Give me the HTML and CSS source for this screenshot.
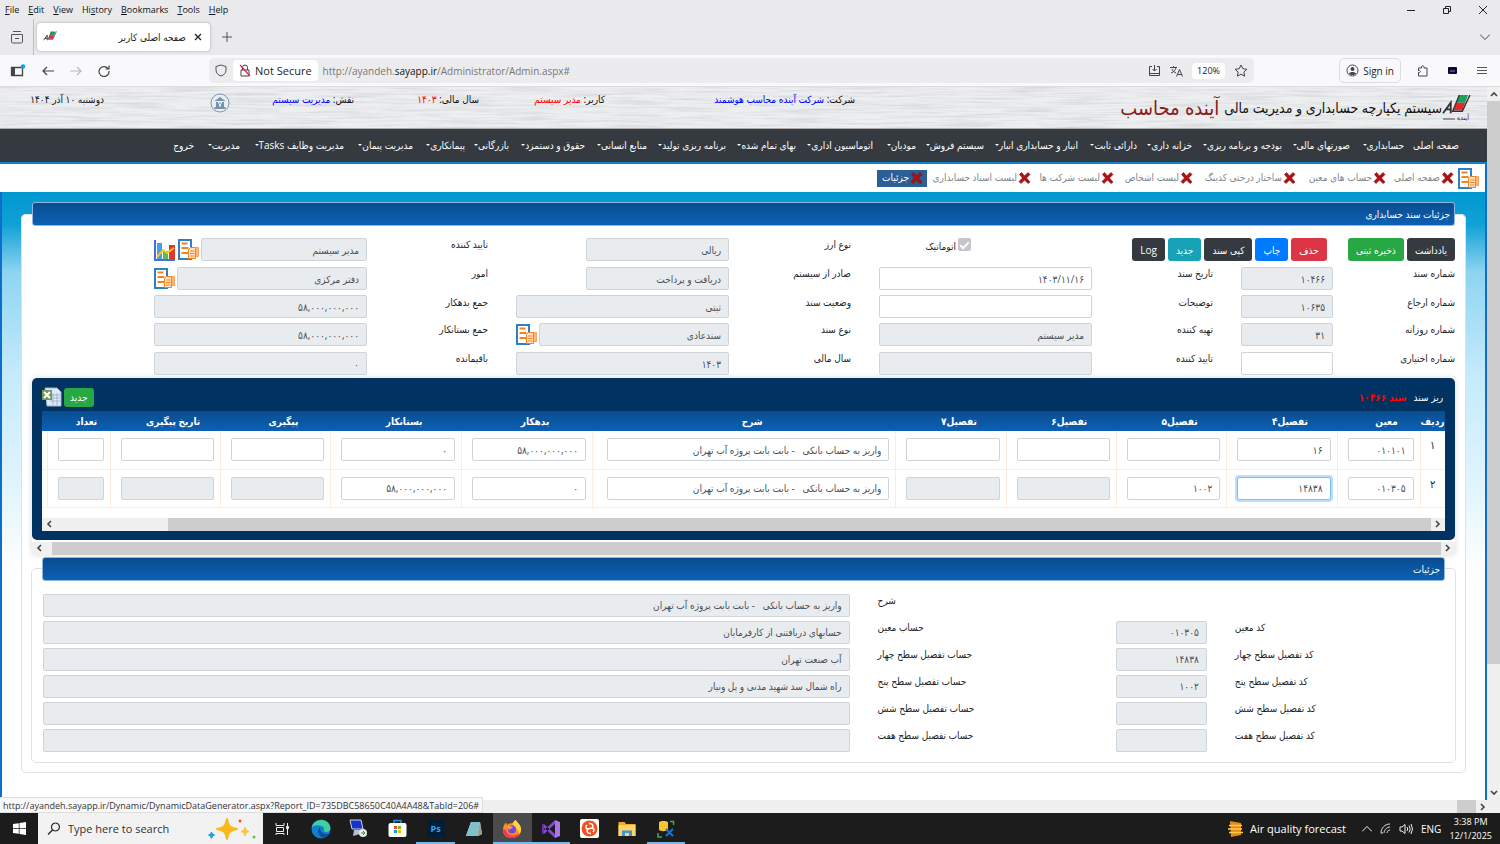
FILE: index.html
```
<!DOCTYPE html>
<html lang="fa">
<head>
    <meta charset="UTF-8" />
    <title>صفحه اصلی کاربر</title>
    <link rel="stylesheet" href="styles.css">
</head>
<body>
    <!-- shared icons -->
    <svg class="defs" width="0" height="0" aria-hidden="true">
        <symbol id="doc" viewBox="0 0 21 21">
            <path d="M1 1h12v19H1z" fill="#fff" stroke="#2f7fc4" stroke-width="2"/>
            <path d="M3.500 4.500h6M3.500 9h7M3.500 14h7" stroke="#f58220" stroke-width="2"/>
            <path d="M13.500 8.500h7v9h-7z" fill="#fbb877" stroke="#f7a35c"/>
            <path d="M10.500 10.500l2-2h5v11h-7z" fill="#fde3c8" stroke="#f58220"/>
            <path d="M12 12h4.500M12 14.500h4.500M12 17h4.500" stroke="#f58220"/>
        </symbol>
        <symbol id="cross" viewBox="0 0 12 12">
            <path d="M1 2.500L3 .500 6 4 9.500.500l2 2L8 6l3.500 4-2 1.500L6 8l-3.500 3.500L.500 9.500 4 6z" fill="#b01010" stroke="#7c0808" stroke-width=".6"/>
        </symbol>
        <symbol id="logo" viewBox="0 0 30 26">
            <path d="M1 20L9 9v11M4 16h5" fill="none" stroke="#333" stroke-width="2"/>
            <path d="M18 1h9l-3 8h-9z" fill="#19a35a"/>
            <path d="M15 9h9l-3 8h-9z" fill="#e8262c"/>
            <path d="M18 1l-7 17h10L29 1" fill="none" stroke="#333" stroke-width="1.500"/>
        </symbol>
        <symbol id="chev-l" viewBox="0 0 8 8"><path d="M6 1L3 4l3 3" fill="none" stroke="#444" stroke-width="1.600"/></symbol>
        <symbol id="chev-r" viewBox="0 0 8 8"><path d="M2 1l3 3-3 3" fill="none" stroke="#444" stroke-width="1.600"/></symbol>
        <symbol id="chev-u" viewBox="0 0 8 8"><path d="M1 6l3-3 3 3" fill="none" stroke="#444" stroke-width="1.600"/></symbol>
        <symbol id="chev-d" viewBox="0 0 8 8"><path d="M1 2l3 3 3-3" fill="none" stroke="#444" stroke-width="1.600"/></symbol>
    </svg>

    <!-- browser -->
    <div class="menubar">
        <a href="#"><u>F</u>ile</a><a href="#"><u>E</u>dit</a><a href="#"><u>V</u>iew</a><a href="#">Hi<u>s</u>tory</a><a href="#"><u>B</u>ookmarks</a><a href="#"><u>T</u>ools</a><a href="#"><u>H</u>elp</a>
        <div class="winbtns">
            <button aria-label="Minimize"><svg width="10" height="10"><path d="M1 5.500h8" stroke="#222"/></svg></button>
            <button aria-label="Restore"><svg width="10" height="10" fill="none" stroke="#222"><path d="M1.500 3.500h5v5h-5zM3.500 3V1.500h5v5H7"/></svg></button>
            <button aria-label="Close"><svg width="10" height="10"><path d="M1 1l8 8M9 1L1 9" stroke="#222"/></svg></button>
        </div>
    </div>
    <div class="tabstrip">
        <button class="recent" aria-label="Recent"><svg width="14" height="14" fill="none" stroke="#555"><path d="M3 1.500h8M1.500 4.500h11v7.500l-1 1h-9l-1-1zM5 8.500h4"/></svg></button>
        <div class="tab">
            <svg width="14" height="12"><use href="#logo"/></svg>
            <span class="tab-title">صفحه اصلی کاربر</span>
            <button aria-label="Close tab"><svg width="8" height="8"><path d="M1 1l6 6M7 1L1 7" stroke="#222" stroke-width="1.300"/></svg></button>
        </div>
        <button aria-label="New tab"><svg width="10" height="10"><path d="M5 0v10M0 5h10" stroke="#555"/></svg></button>
        <button class="alltabs" aria-label="All tabs"><svg width="10" height="6"><path d="M0 .500l5 5 5-5" fill="none" stroke="#444"/></svg></button>
    </div>
    <div class="toolbar">
        <div class="navbtns">
            <button aria-label="Sidebar"><svg width="16" height="14" fill="none"><path d="M1.500 3.500h11v8h-11z" stroke="#444" stroke-width="1.300"/><path d="M2 4h3v7H2z" fill="#444"/><circle cx="13" cy="2.500" r="2.200" fill="#00a4ef"/></svg></button>
            <button aria-label="Back"><svg width="12" height="10"><path d="M5 1L1 5l4 4M1 5h11" fill="none" stroke="#444" stroke-width="1.200"/></svg></button>
            <button aria-label="Forward"><svg width="12" height="10"><path d="M7 1l4 4-4 4M11 5H0" fill="none" stroke="#bbb" stroke-width="1.200"/></svg></button>
            <button aria-label="Reload"><svg width="12" height="12"><path d="M10 3.500A5 5 0 1 0 11 6M11 .500V4H7.500" fill="none" stroke="#444" stroke-width="1.200"/></svg></button>
        </div>
        <div class="urlbar">
            <svg width="12" height="13"><path d="M6 1l5 1.500V6c0 3-2 5-5 6-3-1-5-3-5-6V2.500z" fill="none" stroke="#555"/></svg>
            <button class="secure"><svg width="12" height="13" fill="none"><path d="M2 6h8v6H2zM3.500 6V3.500a2.500 2.500 0 0 1 5 0V6" stroke="#444"/><path d="M1 1l10 11" stroke="#e22850" stroke-width="1.300"/></svg>Not Secure</button>
            <span class="url">http://ayandeh.<b>sayapp.ir</b>/Administrator/Admin.aspx#</span>
            <button aria-label="Install"><svg width="13" height="12" fill="none" stroke="#444"><path d="M4 1.500H1.500v9h10v-9H9M6.500 0v6M4.500 4l2 2 2-2M1.500 8.500h10"/></svg></button>
            <button aria-label="Translate"><svg width="13" height="12" fill="none" stroke="#444"><path d="M0 2.500h7M3.500 1v1.500M1 8c3-1 4.500-3 5-5.500M2 4c.5 2 2 3 4 4M6.500 11.500l3-7 3 7M7.500 9.500h4"/></svg></button>
            <button class="zoom">120%</button>
            <button aria-label="Bookmark"><svg width="14" height="13"><path d="M7 1l1.800 3.700 4.100.6-3 2.800.7 4L7 10.200 3.400 12.100l.7-4-3-2.800 4.100-.6z" fill="none" stroke="#444"/></svg></button>
        </div>
        <div class="tools">
            <button class="signin"><svg width="13" height="13"><circle cx="6.500" cy="6.500" r="5.500" fill="none" stroke="#444"/><circle cx="6.500" cy="5" r="2" fill="#444"/><path d="M3 9.500c1-2 6-2 7 0-2 2-5 2-7 0z" fill="#444"/></svg>Sign in</button>
            <button aria-label="Extensions"><svg width="12" height="13"><path d="M1.500 12V8.500c2.500.5 2.500-2.500 0-2V4h3c-.5-3 3-3 2.500 0h3v8z" fill="none" stroke="#444"/></svg></button>
            <button aria-label="Add-on"><svg width="10" height="9"><rect y="1" width="9" height="7" rx="1" fill="#0c0830"/><path d="M2 5h5" stroke="#8a86c0"/></svg></button>
            <button aria-label="Menu"><svg width="10" height="9"><path d="M0 1.500h10M0 4.500h10M0 7.500h10" stroke="#555"/></svg></button>
        </div>
    </div>

    <div class="viewport">
        <div class="page" dir="rtl">
            <header class="head">
                <svg class="metal" aria-hidden="true"><filter id="brush"><feTurbulence type="fractalNoise" baseFrequency="0.018 0.45" numOctaves="3" seed="4"/><feColorMatrix values="0 0 0 0 .45  0 0 0 0 .47  0 0 0 0 .49  .8 0 0 0 -.32"/></filter><rect width="100%" height="100%" filter="url(#brush)"/></svg>
                <div class="brand">
                    <div class="brandlogo"><svg width="29" height="28"><use href="#logo" height="25"/><path d="M1 25h12" stroke="#444"/><text x="27" y="26" font-size="7" fill="#222">آینده</text></svg></div>
                    <span>سیستم یکپارچه حسابداری و مدیریت مالی</span><b>آینده محاسب</b>
                </div>
                <div>شرکت: <span class="blue">شرکت آینده محاسب هوشمند</span></div>
                <div>کاربر: <span class="red">مدیر سیستم</span></div>
                <div>سال مالی: <span class="red">۱۴۰۳</span></div>
                <div>نقش: <span class="blue">مدیریت سیستم</span></div>
                <div class="seal"><svg width="20" height="20"><circle cx="10" cy="10" r="9" fill="#e9eef2" stroke="#7d98ad"/><path d="M4.500 8L10 4l5.500 4zM6 9h2v5H6zM12 9h2v5h-2zM4.500 14h11v2h-11z" fill="#7593ad"/><path d="M8.500 14v-3l1.500-1.500 1.500 1.500v3z" fill="none" stroke="#7593ad"/></svg></div>
                <div>دوشنبه ۱۰ آذر ۱۴۰۴</div>
            </header>
            <nav class="nav">
                <a href="#">صفحه اصلی</a>
                <a href="#" class="drop">حسابداری</a>
                <a href="#" class="drop">صورتهای مالی</a>
                <a href="#" class="drop">بودجه و برنامه ریزی</a>
                <a href="#" class="drop">خزانه داری</a>
                <a href="#" class="drop">دارائی ثابت</a>
                <a href="#" class="drop">انبار و حسابداری انبار</a>
                <a href="#" class="drop">سیستم فروش</a>
                <a href="#" class="drop">مودیان</a>
                <a href="#" class="drop">اتوماسیون اداری</a>
                <a href="#" class="drop">بهای تمام شده</a>
                <a href="#" class="drop">برنامه ریزی تولید</a>
                <a href="#" class="drop">منابع انسانی</a>
                <a href="#" class="drop">حقوق و دستمزد</a>
                <a href="#" class="drop">بازرگانی</a>
                <a href="#" class="drop">پیمانکاری</a>
                <a href="#" class="drop">مدیریت پیمان</a>
                <a href="#" class="drop">مدیریت وظایف Tasks</a>
                <a href="#" class="drop">مدیریت</a>
                <a href="#">خروج</a>
            </nav>
            <div class="opened">
                <svg width="21" height="21"><use href="#doc"/></svg>
                <div class="opened-list">
                    <a href="#"><svg><use href="#cross"/></svg>صفحه اصلی</a>
                    <a href="#"><svg><use href="#cross"/></svg>حساب های معین</a>
                    <a href="#"><svg><use href="#cross"/></svg>ساختار درختی کدینگ</a>
                    <a href="#"><svg><use href="#cross"/></svg>لیست اشخاص</a>
                    <a href="#"><svg><use href="#cross"/></svg>لیست شرکت ها</a>
                    <a href="#"><svg><use href="#cross"/></svg>لیست اسناد حسابداری</a>
                    <a href="#" class="active"><svg><use href="#cross"/></svg>جزئیات</a>
                </div>
            </div>
            <main class="main">
                <fieldset class="voucher">
                    <legend>جزئیات سند حسابداری</legend>
                    <div class="form">
                        <div class="btns">
                            <button class="btn dark">یادداشت</button>
                            <button class="btn green save">ذخیره ثبتی</button>
                            <button class="btn danger">حذف</button>
                            <button class="btn primary">چاپ</button>
                            <button class="btn dark">کپی سند</button>
                            <button class="btn info">جدید</button>
                            <button class="btn dark">Log</button>
                        </div>
                        <div class="auto c5"><input type="checkbox" id="auto" checked disabled><label for="auto">اتوماتیک</label></div>
                        <label class="c7" for="cur">نوع ارز</label>
                        <div class="c8 short"><input id="cur" value="ریالی" readonly></div>
                        <label class="c10" for="conf">تایید کننده</label>
                        <div class="c11"><input id="conf" value="مدیر سیستم" readonly><svg width="21" height="21"><use href="#doc"/></svg><svg width="22" height="22" viewBox="0 0 22 22"><path d="M1 1v20h20" stroke="#456fd8" stroke-width="2" fill="none"/><path d="M3 4h5v16H3z" fill="#4c9bf5"/><path d="M9 12h5v8H9z" fill="#4cc54a"/><path d="M15 6h6v14h-6z" fill="#e2362b"/><path d="M3 18l6-7 4 3 7-5" fill="none" stroke="#f7c81c" stroke-width="2"/></svg></div>

                        <label class="c1" for="num">شماره سند</label>
                        <div class="c2"><input id="num" value="۱۰۴۶۶" readonly></div>
                        <label class="c4" for="date">تاریخ سند</label>
                        <div class="c5"><input id="date" value="۱۴۰۳/۱۱/۱۶"></div>
                        <label class="c7" for="src">صادر از سیستم</label>
                        <div class="c8 short"><input id="src" value="دریافت و پرداخت" readonly></div>
                        <label class="c10" for="aff">امور</label>
                        <div class="c11"><input id="aff" value="دفتر مرکزی" readonly><svg width="21" height="21"><use href="#doc"/></svg></div>

                        <label class="c1" for="ref">شماره ارجاع</label>
                        <div class="c2"><input id="ref" value="۱۰۶۳۵" readonly></div>
                        <label class="c4" for="desc">توضیحات</label>
                        <div class="c5"><input id="desc"></div>
                        <label class="c7" for="state">وضعیت سند</label>
                        <div class="c8"><input id="state" value="ثبتی" readonly></div>
                        <label class="c10" for="deb">جمع بدهکار</label>
                        <div class="c11"><input id="deb" value="۵۸,۰۰۰,۰۰۰,۰۰۰" readonly></div>

                        <label class="c1" for="daily">شماره روزانه</label>
                        <div class="c2"><input id="daily" value="۳۱" readonly></div>
                        <label class="c4" for="maker">تهیه کننده</label>
                        <div class="c5"><input id="maker" value="مدیر سیستم" readonly></div>
                        <label class="c7" for="kind">نوع سند</label>
                        <div class="c8"><input id="kind" value="سندعادی" readonly><svg width="21" height="21"><use href="#doc"/></svg></div>
                        <label class="c10" for="cre">جمع بستانکار</label>
                        <div class="c11"><input id="cre" value="۵۸,۰۰۰,۰۰۰,۰۰۰" readonly></div>

                        <label class="c1" for="opt">شماره اختیاری</label>
                        <div class="c2"><input id="opt"></div>
                        <label class="c4" for="conf2">تایید کننده</label>
                        <div class="c5"><input id="conf2" readonly></div>
                        <label class="c7" for="year">سال مالی</label>
                        <div class="c8"><input id="year" value="۱۴۰۳" readonly></div>
                        <label class="c10" for="rest">باقیمانده</label>
                        <div class="c11"><input id="rest" class="red" value="۰" readonly></div>
                    </div>

                    <div class="grid-shell">
                        <section class="grid-box">
                            <div class="grid-head">
                                <span>ریز سند</span><b>سند ۱۰۴۶۶</b>
                                <button class="btn green small">جدید</button>
                                <svg width="20" height="20" viewBox="0 0 20 20"><path d="M3 1h12l4 4v14H5z" fill="#dfe9f5" stroke="#9fb4cc"/><path d="M8 8h10M8 11h10M8 14h10M11 6v12M15 6v12" stroke="#9db7d3"/><path d="M0 3h10v10H0z" fill="#6f9a5b"/><path d="M2 5l6 6M8 5l-6 6" stroke="#fff" stroke-width="2"/></svg>
                            </div>
                            <div class="grid-body">
                                <table>
                                    <colgroup><col class="w25"><col class="w83"><col class="w111"><col class="w111"><col class="w111"><col class="w111"><col class="w302"><col class="w130"><col class="w130"><col class="w111"><col class="w111"><col class="w63"><col class="w5"></colgroup>
                                    <thead>
                                        <tr><th>ردیف</th><th>معین</th><th>تفصیل۴</th><th>تفصیل۵</th><th>تفصیل۶</th><th>تفصیل۷</th><th>شرح</th><th>بدهکار</th><th>بستانکار</th><th>پیگیری</th><th>تاریخ پیگیری</th><th>تعداد</th><th></th></tr>
                                    </thead>
                                    <tbody>
                                        <tr>
                                            <td class="no">۱</td>
                                            <td><input aria-label="معین" value="۰۱۰۱۰۱"></td>
                                            <td><input aria-label="تفصیل۴" value="۱۶"></td>
                                            <td><input aria-label="تفصیل۵"></td>
                                            <td><input aria-label="تفصیل۶"></td>
                                            <td><input aria-label="تفصیل۷"></td>
                                            <td><input aria-label="شرح" value="واریز به حساب بانکی   - بابت بابت پروژه آب تهران"></td>
                                            <td><input aria-label="بدهکار" value="۵۸,۰۰۰,۰۰۰,۰۰۰"></td>
                                            <td><input aria-label="بستانکار" value="۰"></td>
                                            <td><input aria-label="پیگیری"></td>
                                            <td><input aria-label="تاریخ پیگیری"></td>
                                            <td><input aria-label="تعداد"></td>
                                            <td></td>
                                        </tr>
                                        <tr>
                                            <td class="no">۲</td>
                                            <td><input aria-label="معین" value="۰۱۰۳۰۵"></td>
                                            <td><input aria-label="تفصیل۴" class="focus" value="۱۴۸۳۸"></td>
                                            <td><input aria-label="تفصیل۵" value="۱۰۰۲"></td>
                                            <td><input aria-label="تفصیل۶" readonly></td>
                                            <td><input aria-label="تفصیل۷" readonly></td>
                                            <td><input aria-label="شرح" value="واریز به حساب بانکی   - بابت بابت پروژه آب تهران"></td>
                                            <td><input aria-label="بدهکار" value="۰"></td>
                                            <td><input aria-label="بستانکار" value="۵۸,۰۰۰,۰۰۰,۰۰۰"></td>
                                            <td><input aria-label="پیگیری" readonly></td>
                                            <td><input aria-label="تاریخ پیگیری" readonly></td>
                                            <td><input aria-label="تعداد" readonly></td>
                                            <td></td>
                                        </tr>
                                    </tbody>
                                </table>
                                <div class="hscroll" dir="ltr"><svg><use href="#chev-l"/></svg><i class="gap-left"></i><i class="thumb"></i><svg><use href="#chev-r"/></svg></div>
                            </div>
                        </section>
                        <div class="hscroll outer" dir="ltr"><svg><use href="#chev-l"/></svg><i class="thumb"></i><svg><use href="#chev-r"/></svg></div>
                    </div>

                    <fieldset class="details">
                        <legend>جزئیات</legend>
                        <div class="dform">
                            <label class="d3" for="d0">شرح</label><input class="d4" id="d0" value="واریز به حساب بانکی   - بابت بابت پروژه آب تهران" readonly>
                            <label class="d1" for="k1">کد معین</label><input class="d2" id="k1" value="۰۱۰۳۰۵" readonly>
                            <label class="d3" for="d1">حساب معین</label><input class="d4" id="d1" value="حسابهای دریافتنی از کارفرمایان" readonly>
                            <label class="d1" for="k2">کد تفصیل سطح چهار</label><input class="d2" id="k2" value="۱۴۸۳۸" readonly>
                            <label class="d3" for="d2">حساب تفصیل سطح چهار</label><input class="d4" id="d2" value="آب صنعت تهران" readonly>
                            <label class="d1" for="k3">کد تفصیل سطح پنج</label><input class="d2" id="k3" value="۱۰۰۲" readonly>
                            <label class="d3" for="d3">حساب تفصیل سطح پنج</label><input class="d4" id="d3" value="راه شمال سد شهید مدنی و پل ونیار" readonly>
                            <label class="d1" for="k4">کد تفصیل سطح شش</label><input class="d2" id="k4" readonly>
                            <label class="d3" for="d4">حساب تفصیل سطح شش</label><input class="d4" id="d4" readonly>
                            <label class="d1" for="k5">کد تفصیل سطح هفت</label><input class="d2" id="k5" readonly>
                            <label class="d3" for="d5">حساب تفصیل سطح هفت</label><input class="d4" id="d5" readonly>
                        </div>
                    </fieldset>
                </fieldset>
            </main>
        </div>
        <div class="vscroll"><svg><use href="#chev-u"/></svg><i class="thumb"></i><i class="rest"></i><svg><use href="#chev-d"/></svg></div>
    </div>
    <div class="hscroll pagescroll"><i class="rest"></i><i class="thumb"></i><svg><use href="#chev-r"/></svg><div class="status">http://ayandeh.sayapp.ir/Dynamic/DynamicDataGenerator.aspx?Report_ID=735DBC58650C40A4A48&amp;TabId=206#</div></div>

    <!-- windows taskbar -->
    <footer class="taskbar">
        <button class="start" aria-label="Start"><svg width="13" height="13"><path d="M0 2l5.800-.8V6H0zM6.500 1L13 0v6H6.500zM0 6.700h5.800v5L0 11zM6.500 6.700H13V13l-6.500-1z" fill="#fff"/></svg></button>
        <div class="search">
            <svg width="14" height="14"><path d="M8.500 1a4 4 0 1 1-.1 0M5.500 8L1 12.500" fill="none" stroke="#222" stroke-width="1.200"/></svg>
            <input type="search" placeholder="Type here to search" aria-label="Search">
            <svg width="48" height="22"><path d="M19 1c1 7 3 9 10 10-7 1-9 3-10 10-1-7-3-9-10-10 7-1 9-3 10-10z" fill="#fbb917" stroke="#fbb917" stroke-width="2" stroke-linejoin="round"/><path d="M37 9c.8 3 1.500 3.700 4 4.500-2.500.8-3.200 1.500-4 4.500-.8-3-1.500-3.700-4-4.500 2.500-.8 3.200-1.500 4-4.500z" fill="#fcc62d" stroke="#fcc62d"/><path d="M3.500 14l1 2 2 1-2 1-1 2.500-1-2.500L.5 17l2-1z" fill="#1aa0e8" stroke="#1aa0e8"/><circle cx="32" cy="3" r="1.500" fill="#f0562b"/><circle cx="46" cy="19" r="1.500" fill="#6bbf3a"/></svg>
        </div>
        <div class="apps">
            <button aria-label="Task view"><svg width="14" height="14" fill="none" stroke="#eee"><path d="M1 1v2.500h8V1M1.500 5.500h7v4h-7zM1 13v-1.500h8V13M12.500 1v3M12.500 7v6"/><path d="M11.500 4.500h2v2h-2z" fill="#eee"/></svg></button>
            <button aria-label="Edge"><svg width="20" height="20"><circle cx="10" cy="10" r="9.500" fill="#1280d0"/><path d="M.6 9C2-1 18-2 19.500 9c0 4-5 5-7 3 1-1 1-4-2-5C6 5.500 1.500 6 .6 9z" fill="#40cfa0"/><path d="M9 8c-4 4-1 10 4 11 3-1 5-3 5.500-4.500-3 1.500-10 0-9.500-6.500z" fill="#0f4c9c"/></svg></button>
            <button aria-label="Server"><svg width="19" height="19"><path d="M1 1h11l2 9H3z" fill="#1634c8" stroke="#c9d4e6"/><path d="M5 11h6v4l-7 2z" fill="#b8c1cc"/><circle cx="14" cy="14" r="4" fill="#e6eee6"/><path d="M12 14h4M14 12l2 2-2 2" fill="none" stroke="#3a8f46"/></svg></button>
            <button aria-label="Store"><svg width="19" height="19"><path d="M6 5V1.500h7V5" fill="none" stroke="#1a9be0" stroke-width="1.500"/><rect x=".5" y="4" width="18" height="14" rx="2" fill="#fff"/><path d="M6 7h3v3H6z" fill="#f25022"/><path d="M10 7h3v3h-3z" fill="#7fba00"/><path d="M6 11h3v3H6z" fill="#00a4ef"/><path d="M10 11h3v3h-3z" fill="#ffb900"/></svg></button>
            <button class="open" aria-label="Photoshop"><span class="ps">Ps</span></button>
            <button aria-label="Notepad"><svg width="18" height="18"><path d="M6 2h9l2 12-4 2H1z" fill="#d6edf0"/><path d="M6 2h9l-3 14H1z" fill="#7fc0cc"/><path d="M15 2l2 12-5 2z" fill="#9c9c88"/></svg></button>
            <button class="open current" aria-label="Firefox"><svg width="20" height="20"><path d="M10 19C4 19 .5 15 1 10c.2-3 1.500-5 3-6.500L5 6c2-2 4-2 5.500-1.500C11 3 12.500 1.500 14 1c0 2 5 4 5 9.500 0 5-4 8.500-9 8.500z" fill="#ff8a1e"/><path d="M14 1c0 2 5 4 5 9.500 0 2-1 4-2 5.500 0-6-4-6-6.500-11.500C11 3 12.500 1.500 14 1z" fill="#ffd43a"/><path d="M1 10c0 6 4 9 9 9 4 0 7-2 8-5-5 4-13 3-14-3z" fill="#f5365c"/><circle cx="10" cy="10.500" r="4" fill="#7a46d8"/><path d="M5 7c3 0 4 1 6 1-1 2-3 1-3.500 3z" fill="#ffab2e"/></svg></button>
            <button class="open" aria-label="Visual Studio"><svg width="20" height="20"><path d="M14 1l5 2v14l-5 2z" fill="#a878e8"/><path d="M1 6l2-1 11 10v4L1 7zM1 14l2 1L14 5V1L1 13z" fill="#8347d0"/><path d="M1 6v8l2 1V5z" fill="#6a32b4"/></svg></button>
            <button aria-label="Remote"><svg width="19" height="19"><rect width="19" height="19" rx="2" fill="#fff"/><circle cx="9.500" cy="9.500" r="8" fill="#f4511e"/><path d="M9 4.500c5-.5 5 5 1 5s-4 5.500 1 5M7 6c-2 2-1 4 1 4M12 9c2 0 3 2 1 4" fill="none" stroke="#fff" stroke-width="1.500"/></svg></button>
            <button aria-label="Explorer"><svg width="18" height="16"><path d="M.5 1h6l1.500 2h9.500v12H.5z" fill="#f0a92e"/><path d="M.5 4h17v11H.5z" fill="#fcd468"/><path d="M4 15V9.500h10V15h-3v-3H7v3z" fill="#3b95d9"/></svg></button>
            <button class="open" aria-label="Database"><svg width="18" height="18"><path d="M2 2c2-1.500 7-1.500 9 0v8c-2 1.500-7 1.500-9 0z" fill="#fcc52e"/><path d="M13 1.500h3.500V5M1 13v4h4" fill="none" stroke="#3fa94c" stroke-width="1.500"/><path d="M9 9l7 7M16 9l-7 7" stroke="#1c74c8" stroke-width="2"/></svg></button>
        </div>
        <div class="tray">
            <button class="air"><svg width="16" height="18"><path d="M2 1l11 2v12L3 17z" fill="#e58a14"/><path d="M1 5.500h13M0 9h14M1 12.500h14" stroke="#ffd04c" stroke-width="1.500"/></svg>Air quality forecast</button>
            <svg width="10" height="6"><path d="M0 5.500l5-5 5 5" fill="none" stroke="#eee"/></svg>
            <svg width="11" height="11" fill="none" stroke="#ddd"><path d="M1 10C1 5 5 1 10 1M4 10c0-3 3-6 6-6M7 10c0-2 1.500-3 3-3M1 10h2"/></svg>
            <svg width="14" height="12" fill="none" stroke="#eee"><path d="M1 4h2l3-2.500v9L3 8H1zM8 4q1.500 2 0 4M10 2.500q2.500 3.500 0 7M12 1q3 5 0 10"/></svg>
            <span class="lang">ENG</span>
            <div class="clock">3:38 PM<br>12/1/2025</div>
        </div>
    </footer>
</body>
</html>
```
FILE: styles.css
```
*{box-sizing:border-box;margin:0;padding:0;}
body{
    height:100vh;
    display:flex;
    flex-direction:column;
    overflow:hidden;
    font-family:"Open Sans","DejaVu Sans Condensed","DejaVu Sans",sans-serif;
    font-size:10px;
    color:#212529;
    background:#fff;
}
button{border:0;background:none;font:inherit;color:inherit;display:inline-flex;align-items:center;justify-content:center;white-space:nowrap;}
input{font:inherit;}
a{color:inherit;text-decoration:none;}
svg{flex:none;display:block;}
.defs{position:absolute;}
.red{color:#f00;}
.blue{color:#00f;}

/* browser */
.menubar{height:19px;flex:none;display:flex;align-items:center;gap:9px;padding-left:5px;background:#eaeaed;color:#111;font-size:9px;}
.winbtns{margin-left:auto;display:flex;gap:26px;padding-right:12px;}
.tabstrip{height:36px;flex:none;display:flex;align-items:center;gap:12px;background:#eaeaed;}
.recent{height:100%;width:34px;border-right:1px solid #bbb;}
.tab{width:173px;height:28px;margin-left:-9px;display:flex;align-items:center;gap:8px;padding:0 8px 0 6px;background:#fff;border-radius:4px;box-shadow:0 0 3px rgba(0,0,0,.3);}
.tab-title{flex:1;direction:rtl;}
.alltabs{margin-left:auto;margin-right:10px;}
.toolbar{height:32px;flex:none;display:flex;align-items:center;background:#f9f9fb;border-bottom:1px solid #ddd;}
.navbtns{width:209px;display:flex;gap:16px;padding-left:10px;}
.urlbar{flex:1;height:25px;display:flex;align-items:center;gap:9px;padding:0 6px;background:#ececef;border-radius:5px;}
.secure{height:21px;gap:4px;padding:0 6px;margin:0 -4px 0 -3px;background:#fff;border-radius:4px;font-size:11px;}
.url{flex:1;font-size:10px;color:#777;}
.url b{font-weight:400;color:#111;}
.zoom{height:16px;padding:0 5px;background:#fff;border-radius:4px;font-size:9px;}
.tools{width:246px;display:flex;align-items:center;justify-content:flex-end;gap:19px;padding-right:13px;}
.signin{height:25px;gap:4px;padding:0 6px;margin-right:-3px;border:1px solid #ddd;border-radius:5px;}

/* page */
.viewport{flex:1;min-height:0;display:flex;}
.page{flex:1;min-width:0;display:flex;flex-direction:column;overflow:hidden;}
.head{
    position:relative;
    height:42px;
    flex:none;
    display:grid;
    grid-template-columns:632fr 250fr 126fr 125fr 124fr 126fr 104fr;
    padding-top:4px;
    background:#eceeef;
    border-bottom:1px solid #aaa;
    color:#111;
    white-space:nowrap;
}
.head>div{position:relative;min-width:0;line-height:16px;}
.metal{position:absolute;top:0;left:0;width:100%;height:100%;}
.brand{display:flex;align-items:center;height:34px;padding-right:16px;font-size:14px;}
.brand b{font-size:20px;font-weight:400;color:#8b1a1a;margin-right:5px;}
.seal svg{margin-top:2px;}
.nav{
    height:35px;
    flex:none;
    display:grid;
    grid-template-columns:55fr 54fr 68fr 90fr 55fr 59fr 94fr 68fr 43fr 77fr 70fr 79fr 62fr 76fr 44fr 52fr 69fr 104fr 46fr 194fr;
    align-items:center;
    padding:0 28px 2px 0;
    background:#343a40;
    border-bottom:2px solid #0d83d0;
    color:#fff;
    white-space:nowrap;
}
.nav a{min-width:0;}
.drop::after{content:"";display:inline-block;border:2px solid transparent;border-top-color:#fff;border-bottom:0;vertical-align:3px;}
.opened{height:28px;flex:none;display:flex;align-items:center;gap:4px;padding-right:6px;color:#808890;border-right:2px solid #0d6fcb;white-space:nowrap;}
.opened-list{flex:1;display:grid;grid-template-columns:68fr 90fr 103fr 79fr 83fr 104fr 50fr 877fr;align-items:center;}
.opened-list a{display:flex;align-items:center;gap:1px;min-width:0;height:17px;padding-bottom:2px;}
.opened-list svg{width:13px;height:12px;margin-top:2px;}
.opened-list .active{background:#2b5f96;color:#fff;padding-right:4px;}
.main{
    flex:1;
    min-height:0;
    padding:10px 19px 0;
    border:solid #0d6fcb;
    border-width:0 2px;
    background:linear-gradient(#0098d0 0,#10a0d5 32px,#8ed4f2 80px,#c4eafb 180px,#e2f5fe 300px,#fff 380px);
}
fieldset{border:1px solid #dee2e6;border-radius:5px;background:#fff;min-width:0;}
legend{
    width:100%;
    height:24px;
    line-height:22px;
    padding:0 4px;
    border:1px solid #8fb6dc;
    border-radius:3px;
    background:linear-gradient(#0a4d90,#0c60b5);
    color:#fff;
}
.voucher{padding:0 10px 9px;}
.form{
    display:grid;
    grid-template-columns:122fr 92fr 28fr 121fr 213fr 28fr 122fr 213fr 28fr 121fr 213fr 122fr;
    grid-template-rows:23px 23px 21px 23px 23px;
    row-gap:6px;
    padding-top:12px;
}
.form>*{min-width:0;}
.form>div{display:flex;align-items:center;gap:2px;}
.form label{line-height:12px;white-space:nowrap;}
.c1{grid-column:1;}
.c2{grid-column:2;}
.c4{grid-column:4;}
.c5{grid-column:5;}
.c7{grid-column:7;}
.c8{grid-column:8;}
.c10{grid-column:10;}
.c11{grid-column:11;}
.form .short{padding-left:33%;}
.form .btns{grid-column:1 / 5;gap:3px;}
.form .auto{padding-right:121px;gap:2px;align-items:flex-start;}
.auto label{padding-top:2px;}
.auto input{appearance:none;width:13px;height:13px;border-radius:2px;background:#c5c5cb;display:grid;place-items:center;}
.auto input::after{content:"";width:3px;height:7px;border:solid #fff;border-width:0 2px 2px 0;transform:rotate(45deg);}
.btn{height:23px;padding:0 8px;border-radius:3px;color:#fff;}
.dark{background:#343a40;}
.green{background:#28a745;}
.danger{background:#dc3545;}
.primary{background:#007bff;}
.info{background:#17a2b8;}
.save{margin-left:18px;}
.small{height:19px;padding:0 6px;}
fieldset input:not([type=checkbox]){
    width:100%;
    min-width:0;
    height:23px;
    padding:0 7px;
    border:1px solid #ced4da;
    border-radius:2px;
    background:#fff;
    color:#495057;
}
fieldset input:not([type=checkbox]):read-only{background:#e9ecef;}
fieldset input.red:not([type=checkbox]){color:#f00;}

.grid-shell{margin:3px 0 2px;border-radius:5px;box-shadow:0 0 6px rgba(0,0,0,.15);}
.grid-box{background:#003362;border-radius:5px;padding:0 10px 9px;}
.grid-head{height:33px;display:flex;align-items:center;gap:2px;padding:5px 2px 0 0;color:#fff;}
.grid-head b{color:#f00;margin:0 5px 0 auto;}
.grid-body{background:#fff;}
table{width:100%;table-layout:fixed;border-collapse:collapse;}
.w25{width:25px;}
.w63{width:63px;}
.w5{width:5px;}
.w83{width:83px;}
.w111{width:8%;}
.w302{width:22%;}
.w130{width:131px;}
thead{background:linear-gradient(#0a4d90,#0c60b5);}
th{height:20px;padding-left:16px;color:#fff;white-space:nowrap;}
th:first-child,th:last-child{padding:0;}
td{height:38px;padding:0 6px 0 10px;border:1px solid #fdecdc;border-top:0;}
td:nth-child(7){padding:0 6px 0 14px;}
td.no{padding:0;text-align:center;vertical-align:top;line-height:28px;font-size:11px;}
td:first-child{border-right:0;}
td:last-child{border-left:0;padding:0;}
fieldset input.focus:not([type=checkbox]){border-color:#80bdff;box-shadow:0 0 0 2px #bfdeff;}
.hscroll{height:13px;display:flex;align-items:center;background:#f0f0f0;}
.hscroll svg,.vscroll svg{width:8px;height:8px;margin:3px;}
.hscroll .thumb{flex:1;height:100%;background:#cdcdcd;}
.gap-left{width:8%;}
.grid-body .hscroll{margin-top:10px;}
.outer{margin-top:2px;}
.outer svg:first-child{margin-right:9px;}
.details{margin:0 -1px;padding:0 10px 10px;}
.dform{
    display:grid;
    grid-template-columns:238fr 91fr 266fr 806fr;
    row-gap:4px;
    padding:13px 0 0 1px;
    line-height:12px;
}
.d1{grid-column:1;direction:ltr;text-align:left;padding-left:28px;}
.d2{grid-column:2;}
.d3{grid-column:3;direction:ltr;text-align:left;padding-left:28px;}
.d4{grid-column:4;}

.vscroll{width:13px;display:flex;flex-direction:column;background:#f0f0f0;}
.vscroll .thumb{flex:565;background:#cdcdcd;}
.vscroll .rest{flex:122;}
.pagescroll{position:relative;flex:none;padding-right:10px;}
.pagescroll .rest{flex:1;}
.pagescroll .thumb{flex:none;width:19px;}
.status{position:absolute;left:0;bottom:0;height:16px;line-height:15px;padding:0 3px;background:#f9f9fb;border:1px solid #ddd;border-left:0;font-size:9px;color:#333;white-space:nowrap;}

/* taskbar */
.taskbar{height:31px;flex:none;display:flex;background:#1c1c1c;color:#fff;}
.start{width:38px;}
.search{width:225px;display:flex;align-items:center;gap:7px;padding:0 7px 0 9px;background:#f2f2f2;}
.search input{flex:1;min-width:0;border:0;background:none;font-size:11px;}
.search input::placeholder{color:#333;}
.apps{display:flex;width:422px;}
.apps button{flex:1;height:31px;}
.apps .open{border-bottom:2px solid #76b9ed;padding-top:2px;}
.apps .current{background:#4b4b4b;}
.ps{width:18px;height:18px;line-height:18px;border-radius:3px;background:#001e36;color:#31a8ff;font-size:9px;font-weight:700;}
.tray{margin-left:auto;display:flex;align-items:center;gap:8px;padding-right:8px;white-space:nowrap;}
.air{gap:6px;font-size:11px;margin-right:8px;}
.clock{font-size:9px;line-height:14px;text-align:center;}
```
